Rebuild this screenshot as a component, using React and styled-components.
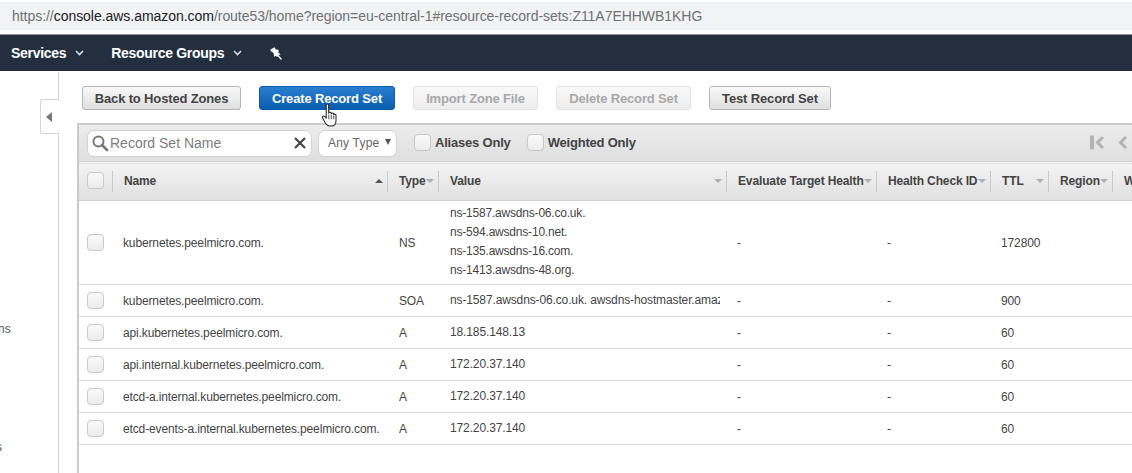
import React from "react";
import styled, { createGlobalStyle } from "styled-components";

const Global = createGlobalStyle`
  html, body { margin: 0; padding: 0; background: #fff; }
  body { font-family: "Liberation Sans", Arial, sans-serif; font-size: 12px; color: #444; }
`;
const Page = styled.div`
  width: 1132px; height: 473px; overflow: hidden; display: flex; flex-direction: column; background: #fff; position: relative;
`;
const UrlBar = styled.div`
  height: 28px; margin-top: 2px; margin-bottom: 4px; padding-left: 12px; background: #f1f3f4;
  display: flex; align-items: center; font-size: 14px; color: #6f7173; white-space: nowrap; letter-spacing: -0.04px;
  b { font-weight: normal; color: #202124; }
`;
const Nav = styled.nav`
  height: 36px; flex: none; background: #232f3e; border-top: 1px solid #8e9196; box-sizing: content-box;
  display: flex; align-items: center; padding-left: 11px; color: #fff; font-weight: bold; font-size: 14px; letter-spacing: -0.3px;
`;
const NavItem = styled.span`
  display: flex; align-items: center; gap: 9px; margin-right: ${p => p.$gap}px;
`;
const Main = styled.div`
  flex: 1; display: flex; min-height: 0;
`;
const Sidebar = styled.aside`
  width: 58px; flex: none; border-right: 1px solid #d5d5d5; position: relative; color: #555; font-size: 12px; padding-top: 250px; box-sizing: content-box; margin-top: 1px;
`;
const SideLabel = styled.div`
  height: 14px; line-height: 14px; margin-top: ${p => p.$top || 0}px; margin-left: ${p => p.$left || 0}px; white-space: nowrap;
`;
const CollapseTab = styled.div`
  position: absolute; left: 40px; top: 27px; width: 19px; height: 35px; box-sizing: border-box; background: #fff;
  border: 1px solid #d5d5d5; border-right: 0; border-radius: 3px 0 0 3px; display: flex; align-items: center; justify-content: center;
  &::before { content: ""; border-style: solid; border-width: 5px 6px 5px 0; border-color: transparent #777 transparent transparent; margin-right: 2px; }
`;
const Content = styled.main`
  flex: 1; min-width: 0; padding: 15px 0 0 18px; display: flex; flex-direction: column;
`;
const Actions = styled.div`
  display: flex; gap: 18px; padding-left: 5px; margin-bottom: 13px;
`;
const Btn = styled.button`
  height: 24px; width: ${p => p.$w}px; box-sizing: border-box; padding: 0; font: bold 13px "Liberation Sans", Arial, sans-serif; border-radius: 3px;
  letter-spacing: -0.15px;
  border: 1px solid ${p => p.$primary ? "#0a5bad" : p.$disabled ? "#e2e2e2" : "#b5b5b5"};
  color: ${p => p.$primary ? "#fff" : p.$disabled ? "#a9a9a9" : "#444"};
  background: ${p => p.$primary ? "linear-gradient(#2a7fd0, #0a5cae)" : p.$disabled ? "linear-gradient(#f8f8f8, #ededed)" : "linear-gradient(#f9f9f9, #dfdfdf)"};
`;
const Panel = styled.section`
  width: 1200px; flex: 1; border-top: 2px solid #cacaca; border-left: 2px solid #cacaca; box-sizing: border-box;
`;
const Toolbar = styled.div`
  height: 37px; box-sizing: border-box; padding: 5px 0 0 8px; display: flex; align-items: flex-start;
  background: linear-gradient(#ececec, #dfdfdf); border-bottom: 1px solid #cfcfcf; width: 1055px;
`;
const Search = styled.div`
  width: 225px; height: 27px; box-sizing: border-box; background: #fff; border: 1px solid #d2d2d2; border-radius: 7px;
  display: flex; align-items: center; padding: 0 4px 2px 3px; margin-right: 6px; font-size: 14px; color: #7d7d7d;
`;
const SearchText = styled.span`
  flex: 1; margin-left: 1px; white-space: nowrap;
`;
const TypeSelect = styled.div`
  width: 79px; height: 27px; box-sizing: border-box; background: #fff; border: 1px solid #d2d2d2; border-radius: 7px;
  display: flex; align-items: center; padding-left: 9px; padding-bottom: 1px; gap: 6px; margin-right: 17px; font-size: 12px; color: #666; letter-spacing: 0.2px;
  &::after { content: ""; border-style: solid; border-width: 6px 3px 0 3px; border-color: #555 transparent transparent transparent; margin-top: -3px; }
`;
const Check = styled.span`
  display: block; width: 17px; height: 17px; box-sizing: border-box; border: 1px solid #c8c8c8; border-radius: 4px; flex: none;
  background: linear-gradient(#fafafa, #ececec);
`;
const Filter = styled.label`
  display: flex; align-items: center; gap: 4px; height: 25px; font-weight: bold; font-size: 13px; color: #444; margin-right: ${p => p.$gap}px;
  white-space: nowrap; letter-spacing: -0.2px;
`;
const Pager = styled.div`
  margin-left: 454px; display: flex; align-items: center; height: 25px; gap: 12px;
`;
const Table = styled.table`
  border-collapse: collapse; table-layout: fixed; width: 1093px;
`;
const HeadRow = styled.tr`
  height: 38px; background: linear-gradient(#f3f3f3, #e0e0e0); border-top: 1px solid #f7f7f7; border-bottom: 1px solid #cfcfcf;
`;
const Th = styled.th`
  position: relative; padding: 0 0 2px 11px; font-size: 12px; font-weight: bold; text-align: left; color: #444; white-space: nowrap; overflow: hidden; letter-spacing: -0.13px;
  &:not(:last-child)::after { content: ""; position: absolute; right: 0; top: 8px; bottom: 8px; width: 1px; background: #c9c9c9; }
`;
const BoxTh = styled(Th)`
  padding-left: 8px;
`;
const HeadInner = styled.span`
  display: flex; align-items: center; justify-content: space-between; padding-right: 5px;
`;
const Caret = styled.i`
  display: block; flex: none; border-style: solid; border-color: transparent;
  border-width: ${p => p.$up ? "0 4px 4px 4px" : "4px 4px 0 4px"};
  ${p => p.$up ? "border-bottom-color: #555;" : "border-top-color: #b0b0b0;"}
  margin-top: 1px;
`;
const Row = styled.tr`
  height: ${p => p.$h || 32}px; border-bottom: 1px solid #dcdcdc;
`;
const Td = styled.td`
  padding: 0 0 0 ${p => p.$pad ?? 10}px; font-size: 12px; color: #444; white-space: nowrap; overflow: hidden; letter-spacing: -0.13px;
  vertical-align: middle;
`;
const ValueTd = styled(Td)`
  position: relative; top: -1px; padding-left: 11px;
`;
const ValueText = styled.div`
  overflow: hidden; margin-right: 7px;
`;
const NsLine = styled.div`
  line-height: 19px; letter-spacing: -0.2px;
`;
const BoxCell = styled.td`
  padding: 0 0 0 8px;
`;
const Cursor = styled.svg`
  position: absolute; left: 321px; top: 103px; width: 19px; height: 25px;
`;

const columns = [34, 275, 51, 288, 150, 114, 58, 64, 59];
const heads = ["Type", "Value", "Evaluate Target Health", "Health Check ID", "TTL", "Region"];
const rows = [
  ["kubernetes.peelmicro.com.", "SOA", "ns-1587.awsdns-06.co.uk. awsdns-hostmaster.amazon.com. 1 7200", "900"],
  ["api.kubernetes.peelmicro.com.", "A", "18.185.148.13", "60"],
  ["api.internal.kubernetes.peelmicro.com.", "A", "172.20.37.140", "60"],
  ["etcd-a.internal.kubernetes.peelmicro.com.", "A", "172.20.37.140", "60"],
  ["etcd-events-a.internal.kubernetes.peelmicro.com.", "A", "172.20.37.140", "60"],
];
const nameservers = ["ns-1587.awsdns-06.co.uk.", "ns-594.awsdns-10.net.", "ns-135.awsdns-16.com.", "ns-1413.awsdns-48.org."];

const Chevron = () => (
  <svg width="9" height="6" viewBox="0 0 9 6"><path d="M1 1l3.5 3.5L8 1" fill="none" stroke="#d8dbdf" strokeWidth="1.6" /></svg>
);

export default function App() {
  return (
    <Page>
      <Global />
      <UrlBar>https://<b>console.aws.amazon.com</b>/route53/home?region=eu-central-1#resource-record-sets:Z11A7EHHWB1KHG</UrlBar>
      <Nav>
        <NavItem $gap={27}>Services <Chevron /></NavItem>
        <NavItem $gap={28}>Resource Groups <Chevron /></NavItem>
        <svg width="13" height="13" viewBox="0 0 13 13"><path d="M0.5 2.5L4.5 0.2 5.8 2.4 8.6 2.8 8.4 5.6 10.6 7.4 7.8 8.6 7.6 10 5.6 9 4 9.8 3.8 6.4 2.2 4.8 0.8 4.6z" fill="#fff" /><path d="M7.5 8l4 4.5" stroke="#fff" strokeWidth="1.2" /></svg>
      </Nav>
      <Main>
        <Sidebar>
          <CollapseTab />
          <SideLabel $left={-2}>ns</SideLabel>
          <SideLabel $top={104} $left={-4}>s</SideLabel>
          <SideLabel $top={15} $left={-5}>ts</SideLabel>
        </Sidebar>
        <Content>
          <Actions>
            <Btn $w={159}>Back to Hosted Zones</Btn>
            <Btn $w={136} $primary>Create Record Set</Btn>
            <Btn $w={125} $disabled>Import Zone File</Btn>
            <Btn $w={135} $disabled>Delete Record Set</Btn>
            <Btn $w={122}>Test Record Set</Btn>
          </Actions>
          <Panel>
            <Toolbar>
              <Search>
                <svg width="18" height="18" viewBox="0 0 18 18"><circle cx="7.5" cy="7.5" r="5" fill="none" stroke="#777" strokeWidth="2" /><path d="M11 11l5 5" stroke="#777" strokeWidth="2.6" strokeLinecap="round" /></svg>
                <SearchText>Record Set Name</SearchText>
                <svg width="14" height="14" viewBox="0 0 14 14"><path d="M2 2l10 10M12 2L2 12" stroke="#444" strokeWidth="2.2" /></svg>
              </Search>
              <TypeSelect>Any Type</TypeSelect>
              <Filter $gap={16}><Check />Aliases Only</Filter>
              <Filter $gap={0}><Check />Weighted Only</Filter>
              <Pager>
                <svg width="15" height="15" viewBox="0 0 15 15"><path d="M0 0.5h4v14H0z" fill="#b4b4b4" /><path d="M13 2L7.5 7.5 13 13" fill="none" stroke="#b4b4b4" strokeWidth="3" /></svg>
                <svg width="11" height="15" viewBox="0 0 11 15"><path d="M9 2L3.5 7.5 9 13" fill="none" stroke="#b4b4b4" strokeWidth="3" /></svg>
              </Pager>
            </Toolbar>
            <Table>
              <colgroup>{columns.map((w, i) => <col key={i} style={{ width: w }} />)}</colgroup>
              <thead>
                <HeadRow>
                  <BoxTh><Check /></BoxTh>
                  <Th><HeadInner>Name<Caret $up /></HeadInner></Th>
                  {heads.map(t => (
                    <Th key={t}><HeadInner>{t}<Caret /></HeadInner></Th>
                  ))}
                  <Th>Weight</Th>
                </HeadRow>
              </thead>
              <tbody>
                <Row $h={84}>
                  <BoxCell><Check /></BoxCell>
                  <Td>kubernetes.peelmicro.com.</Td>
                  <Td $pad={11}>NS</Td>
                  <ValueTd><ValueText>{nameservers.map(n => <NsLine key={n}>{n}</NsLine>)}</ValueText></ValueTd>
                  <Td>-</Td>
                  <Td>-</Td>
                  <Td>172800</Td>
                  <Td /><Td />
                </Row>
                {rows.map(([name, type, value, ttl]) => (
                  <Row key={name + type}>
                    <BoxCell><Check /></BoxCell>
                    <Td>{name}</Td>
                    <Td $pad={11}>{type}</Td>
                    <ValueTd><ValueText>{value}</ValueText></ValueTd>
                    <Td>-</Td>
                    <Td>-</Td>
                    <Td>{ttl}</Td>
                    <Td /><Td />
                  </Row>
                ))}
              </tbody>
            </Table>
          </Panel>
        </Content>
      </Main>
      <Cursor viewBox="0 0 20 26">
        <path d="M5.5 2.2c0-1.6 2.6-1.6 2.6 0v8.3c.4-1.5 2.6-1.3 2.7.2v.5c.4-1.3 2.5-1.1 2.6.3v.7c.5-1 2.3-.8 2.4.5v5.5c0 3.5-1.5 5.8-5 5.8H9c-2.3 0-3.3-1.2-4.4-3L1.7 15.6c-.9-1.5 1.2-2.9 2.3-1.5l1.5 1.7z" fill="#fff" stroke="#222" strokeWidth="1.1" strokeLinejoin="round" />
        <path d="M8.2 12v5M10.8 12v5M13.4 13v4" stroke="#222" strokeWidth="0.8" />
      </Cursor>
    </Page>
  );
}
